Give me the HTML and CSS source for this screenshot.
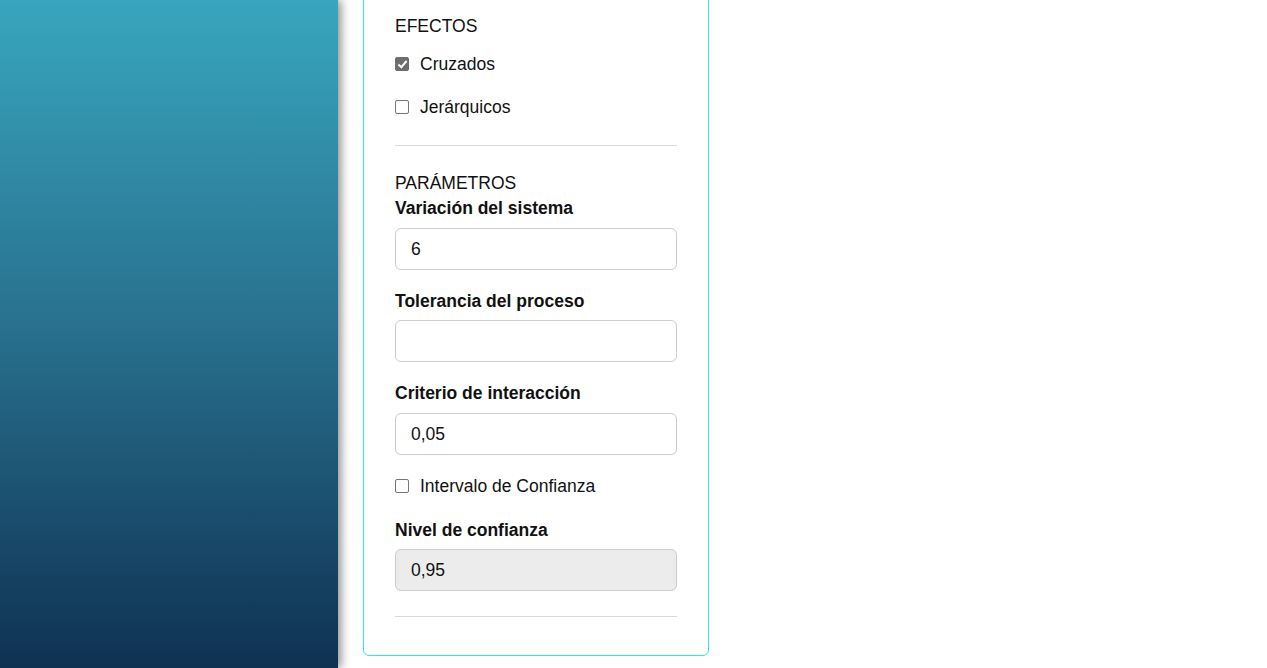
FILE: index.html
```html
<!DOCTYPE html>
<html lang="es">
<head>
  <meta charset="UTF-8">
  <meta name="viewport" content="width=device-width, initial-scale=1.0">
  <title>Parámetros</title>
  <link rel="stylesheet" href="styles.css">
</head>
<body>
  <div class="layout">
    <aside class="sidebar"></aside>
    <main class="content">
      <div class="panel">
        <div class="section-title">EFECTOS</div>
        <label class="check first">
          <input type="checkbox" checked>
          <span>Cruzados</span>
        </label>
        <label class="check second">
          <input type="checkbox">
          <span>Jerárquicos</span>
        </label>

        <hr>

        <div class="section-title params">PARÁMETROS</div>
        <div class="field first">
          <label class="field-label" for="variacion">Variación del sistema</label>
          <input type="text" id="variacion" class="field-input" value="6">
        </div>
        <div class="field">
          <label class="field-label" for="tolerancia">Tolerancia del proceso</label>
          <input type="text" id="tolerancia" class="field-input" value="">
        </div>
        <div class="field third">
          <label class="field-label" for="criterio">Criterio de interacción</label>
          <input type="text" id="criterio" class="field-input" value="0,05">
        </div>
        <label class="check interval">
          <input type="checkbox">
          <span>Intervalo de Confianza</span>
        </label>
        <div class="field last">
          <label class="field-label" for="nivel">Nivel de confianza</label>
          <input type="text" id="nivel" class="field-input" value="0,95" disabled>
        </div>

        <hr class="bottom">
      </div>
    </main>
  </div>
</body>
</html>
```

FILE: styles.css
```css
html, body {
  margin: 0;
  height: 100%;
  overflow: hidden;
}

body {
  font-family: "Liberation Sans", Arial, sans-serif;
  font-size: 17.5px;
  color: #111;
  background: #fff;
}

.layout {
  display: flex;
  height: 100vh;
}

.sidebar {
  width: 338px;
  flex-shrink: 0;
  background: linear-gradient(to bottom, #38a6be 0%, #286f8d 50%, #0f3152 100%);
  box-shadow: 3px 0 9px rgba(0, 0, 0, 0.45);
  position: relative;
  z-index: 1;
}

.content {
  flex: 1;
  padding-left: 25px;
}

.panel {
  width: 282px;
  margin-top: -20px;
  padding: 35px 31px 38px;
  border: 1px solid #2eeedb;
  border-radius: 6px;
  background: #fff;
}

.section-title {
  line-height: 20px;
}

.params {
  margin-top: 27px;
}

.check {
  display: flex;
  align-items: center;
  gap: 11px;
  line-height: 20px;
  cursor: pointer;
}

.check.first {
  margin-top: 18px;
}

.check.second {
  margin-top: 23px;
}

.check.interval {
  margin-top: 21px;
  margin-bottom: 24px;
}

.check input {
  appearance: none;
  -webkit-appearance: none;
  width: 14px;
  height: 14px;
  margin: 0;
  border: 1px solid #767676;
  border-radius: 2px;
  background: #fff;
  position: relative;
  flex-shrink: 0;
}

.check input:checked {
  background: #6d6d6d;
  border-color: #6d6d6d;
}

.check input:checked::after {
  content: "";
  position: absolute;
  left: 4px;
  top: 1px;
  width: 3px;
  height: 7px;
  border: solid #fff;
  border-width: 0 2px 2px 0;
  transform: rotate(40deg);
}

hr {
  border: 0;
  border-top: 1px solid #d9d9d9;
  margin: 28px 0 0;
}

hr.bottom {
  margin-top: 25px;
}

.field {
  margin-bottom: 21px;
}

.field.first {
  margin-top: 5px;
}

.field.last {
  margin-bottom: 0;
}

.field-label {
  display: block;
  font-weight: bold;
  line-height: 20px;
  margin-bottom: 9px;
}

.field.first .field-label,
.field.third .field-label {
  margin-bottom: 10px;
}

.field-input {
  display: block;
  box-sizing: border-box;
  width: 100%;
  height: 42px;
  padding: 0 15px;
  border: 1px solid #cccccc;
  border-radius: 6px;
  font-family: inherit;
  font-size: 17.5px;
  color: #111;
  background: #fff;
}

.field-input:disabled {
  background: #ececec;
  color: #111;
}
```
